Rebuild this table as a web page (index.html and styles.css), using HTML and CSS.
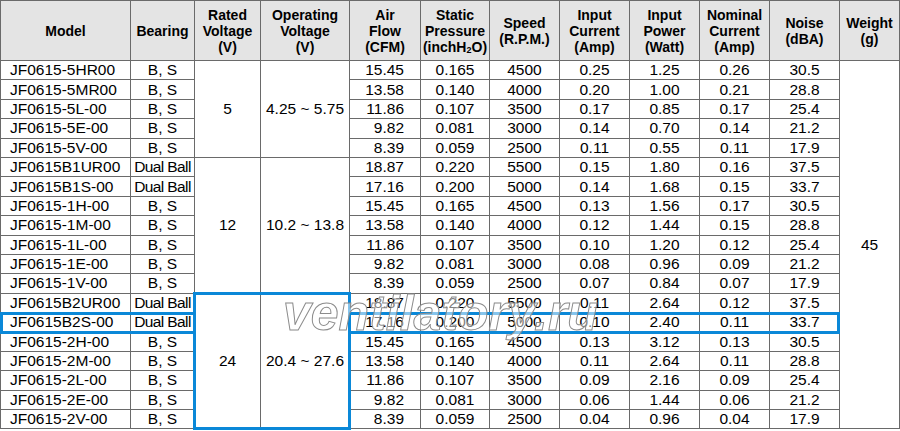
FILE: index.html
```html
<!DOCTYPE html>
<html>
<head>
<meta charset="utf-8">
<link rel="stylesheet" href="styles.css">
</head>
<body>
<div class="wrap">
<table class="spec">
<colgroup>
<col class="c-model"><col class="c-bearing"><col class="c-rated"><col class="c-op"><col class="c-air"><col class="c-static"><col class="c-speed"><col class="c-cur"><col class="c-pow"><col class="c-nom"><col class="c-noise"><col class="c-weight">
</colgroup>
<thead>
<tr class="head">
<th>Model</th>
<th>Bearing</th>
<th>Rated<br>Voltage<br>(V)</th>
<th>Operating<br>Voltage<br>(V)</th>
<th>Air<br>Flow<br>(CFM)</th>
<th>Static<br>Pressure<br>(inchH<sub>2</sub>O)</th>
<th>Speed<br>(R.P.M.)</th>
<th>Input<br>Current<br>(Amp)</th>
<th>Input<br>Power<br>(Watt)</th>
<th>Nominal<br>Current<br>(Amp)</th>
<th>Noise<br>(dBA)</th>
<th>Weight<br>(g)</th>
</tr>
</thead>
<tbody>
<tr><td class="model">JF0615-5HR00</td><td>B, S</td><td rowspan="5">5</td><td rowspan="5">4.25 ~ 5.75</td><td class="air">15.45</td><td>0.165</td><td>4500</td><td>0.25</td><td>1.25</td><td>0.26</td><td>30.5</td><td rowspan="19">45</td></tr>
<tr><td class="model">JF0615-5MR00</td><td>B, S</td><td class="air">13.58</td><td>0.140</td><td>4000</td><td>0.20</td><td>1.00</td><td>0.21</td><td>28.8</td></tr>
<tr><td class="model">JF0615-5L-00</td><td>B, S</td><td class="air">11.86</td><td>0.107</td><td>3500</td><td>0.17</td><td>0.85</td><td>0.17</td><td>25.4</td></tr>
<tr><td class="model">JF0615-5E-00</td><td>B, S</td><td class="air">9.82</td><td>0.081</td><td>3000</td><td>0.14</td><td>0.70</td><td>0.14</td><td>21.2</td></tr>
<tr><td class="model">JF0615-5V-00</td><td>B, S</td><td class="air">8.39</td><td>0.059</td><td>2500</td><td>0.11</td><td>0.55</td><td>0.11</td><td>17.9</td></tr>
<tr><td class="model">JF0615B1UR00</td><td class="dual">Dual Ball</td><td rowspan="7">12</td><td rowspan="7">10.2 ~ 13.8</td><td class="air">18.87</td><td>0.220</td><td>5500</td><td>0.15</td><td>1.80</td><td>0.16</td><td>37.5</td></tr>
<tr><td class="model">JF0615B1S-00</td><td class="dual">Dual Ball</td><td class="air">17.16</td><td>0.200</td><td>5000</td><td>0.14</td><td>1.68</td><td>0.15</td><td>33.7</td></tr>
<tr><td class="model">JF0615-1H-00</td><td>B, S</td><td class="air">15.45</td><td>0.165</td><td>4500</td><td>0.13</td><td>1.56</td><td>0.17</td><td>30.5</td></tr>
<tr><td class="model">JF0615-1M-00</td><td>B, S</td><td class="air">13.58</td><td>0.140</td><td>4000</td><td>0.12</td><td>1.44</td><td>0.15</td><td>28.8</td></tr>
<tr><td class="model">JF0615-1L-00</td><td>B, S</td><td class="air">11.86</td><td>0.107</td><td>3500</td><td>0.10</td><td>1.20</td><td>0.12</td><td>25.4</td></tr>
<tr><td class="model">JF0615-1E-00</td><td>B, S</td><td class="air">9.82</td><td>0.081</td><td>3000</td><td>0.08</td><td>0.96</td><td>0.09</td><td>21.2</td></tr>
<tr><td class="model">JF0615-1V-00</td><td>B, S</td><td class="air">8.39</td><td>0.059</td><td>2500</td><td>0.07</td><td>0.84</td><td>0.07</td><td>17.9</td></tr>
<tr><td class="model">JF0615B2UR00</td><td class="dual">Dual Ball</td><td rowspan="7">24</td><td rowspan="7">20.4 ~ 27.6</td><td class="air">18.87</td><td>0.220</td><td>5500</td><td>0.11</td><td>2.64</td><td>0.12</td><td>37.5</td></tr>
<tr><td class="model">JF0615B2S-00</td><td class="dual">Dual Ball</td><td class="air">17.16</td><td>0.200</td><td>5000</td><td>0.10</td><td>2.40</td><td>0.11</td><td>33.7</td></tr>
<tr><td class="model">JF0615-2H-00</td><td>B, S</td><td class="air">15.45</td><td>0.165</td><td>4500</td><td>0.13</td><td>3.12</td><td>0.13</td><td>30.5</td></tr>
<tr><td class="model">JF0615-2M-00</td><td>B, S</td><td class="air">13.58</td><td>0.140</td><td>4000</td><td>0.11</td><td>2.64</td><td>0.11</td><td>28.8</td></tr>
<tr><td class="model">JF0615-2L-00</td><td>B, S</td><td class="air">11.86</td><td>0.107</td><td>3500</td><td>0.09</td><td>2.16</td><td>0.09</td><td>25.4</td></tr>
<tr><td class="model">JF0615-2E-00</td><td>B, S</td><td class="air">9.82</td><td>0.081</td><td>3000</td><td>0.06</td><td>1.44</td><td>0.06</td><td>21.2</td></tr>
<tr><td class="model">JF0615-2V-00</td><td>B, S</td><td class="air">8.39</td><td>0.059</td><td>2500</td><td>0.04</td><td>0.96</td><td>0.04</td><td>17.9</td></tr>
</tbody>
</table>
<div class="hl hl-col"></div>
<div class="hl hl-row-left"></div>
<div class="hl hl-row-right"></div>
<div class="watermark">ventilatory.ru</div>
</div>
</body>
</html>
```

FILE: styles.css
```css
html, body {
  margin: 0;
  padding: 0;
  background: #ffffff;
}

.wrap {
  position: relative;
  width: 900px;
  height: 431px;
  overflow: hidden;
  font-family: "Liberation Sans", Arial, sans-serif;
  color: #000;
}

.spec {
  border-collapse: collapse;
  table-layout: fixed;
  width: 899px;
}

.c-model { width: 130px; }
.c-bearing { width: 64px; }
.c-rated { width: 66px; }
.c-op { width: 89px; }
.c-air { width: 71px; }
.c-static { width: 69px; }
.c-speed { width: 70px; }
.c-cur { width: 70px; }
.c-pow { width: 70px; }
.c-nom { width: 70px; }
.c-noise { width: 70px; }
.c-weight { width: 60px; }

.spec th,
.spec td {
  border: 1px solid #6a6a6a;
  padding: 0;
  text-align: center;
  vertical-align: middle;
}

.spec tr.head {
  height: 60px;
}

.spec th {
  background: #e4e4e4;
  font-weight: bold;
  font-size: 14px;
  line-height: 16px;
}

.spec th sub {
  font-size: 9px;
  vertical-align: -1px;
  line-height: 0;
}

.spec td {
  font-size: 15.5px;
  line-height: 18px;
  height: 18.4px;
}

.spec td.model {
  text-align: left;
  padding-left: 9px;
}

.spec td.air {
  text-align: right;
  padding-right: 16px;
}

.spec td.dual {
  letter-spacing: -0.6px;
  white-space: nowrap;
}

.hl {
  position: absolute;
  border: 3px solid #0a88d8;
  box-sizing: border-box;
}

.hl-col {
  left: 193px;
  top: 292px;
  width: 158px;
  height: 138px;
}

.hl-row-left {
  left: 0;
  top: 312px;
  width: 196px;
  height: 22px;
  border-right: none;
}

.hl-row-right {
  left: 348px;
  top: 312px;
  width: 492px;
  height: 22px;
  border-left: none;
}

.watermark {
  position: absolute;
  left: 283px;
  top: 280px;
  font-family: "Liberation Sans", Arial, sans-serif;
  font-style: italic;
  font-weight: bold;
  font-size: 50px;
  line-height: 66px;
  color: rgba(255, 255, 255, 0.5);
  -webkit-text-stroke: 1px #8c8c8c;
  white-space: nowrap;
  pointer-events: none;
}
```
